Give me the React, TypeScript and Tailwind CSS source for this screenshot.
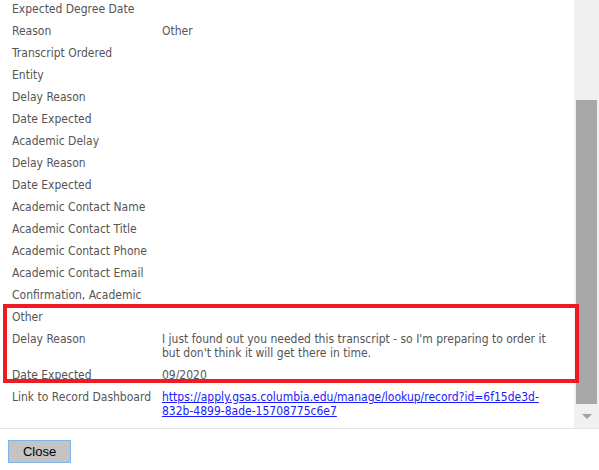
import React from "react";

type Row = { label: string; value?: React.ReactNode };

const rows: Row[] = [
  { label: "Expected Degree Date" },
  { label: "Reason", value: "Other" },
  { label: "Transcript Ordered" },
  { label: "Entity" },
  { label: "Delay Reason" },
  { label: "Date Expected" },
  { label: "Academic Delay" },
  { label: "Delay Reason" },
  { label: "Date Expected" },
  { label: "Academic Contact Name" },
  { label: "Academic Contact Title" },
  { label: "Academic Contact Phone" },
  { label: "Academic Contact Email" },
  { label: "Confirmation, Academic" },
  { label: "Other" },
  {
    label: "Delay Reason",
    value:
      "I just found out you needed this transcript - so I'm preparing to order it but don't think it will get there in time.",
  },
  { label: "Date Expected", value: "09/2020" },
  {
    label: "Link to Record Dashboard",
    value: (
      <a href="#" className="text-[#1a1aff] underline">
        https://apply.gsas.columbia.edu/manage/lookup/record?id=6f15de3d-832b-4899-8ade-15708775c6e7
      </a>
    ),
  },
];

export default function App() {
  return (
    <div
      className="w-[599px] h-[470px] bg-white flex flex-col overflow-hidden"
      style={{ fontFamily: '"DejaVu Sans Condensed", "DejaVu Sans", sans-serif' }}
    >
      <div className="relative h-[428px] flex overflow-hidden">
        <div className="flex-1 overflow-hidden">
          <div className="-mt-[2px]">
            {rows.map((r, i) => (
              <div key={i} className="flex py-[4px] text-[12px] leading-[14px] text-[#555]">
                <div className="w-[162px] shrink-0 pl-[12px] whitespace-nowrap">{r.label}</div>
                <div className="w-[390px] break-words">{r.value}</div>
              </div>
            ))}
          </div>
        </div>
        {/* scrollbar */}
        <div className="w-[25px] bg-[#f0f0f0] flex flex-col items-center">
          <div className="h-[100px]" />
          <div className="w-[21px] h-[304px] bg-[#a8a8a8]" />
          <div className="flex-1 flex items-center justify-center">
            <div className="w-0 h-0 border-l-[5px] border-r-[5px] border-t-[5px] border-l-transparent border-r-transparent border-t-[#a3a3a3]" />
          </div>
        </div>
        {/* highlight box */}
        <div className="absolute left-[3px] top-[304px] w-[576px] h-[79px] border-[4px] border-[#ed1c24] pointer-events-none" />
      </div>
      <div className="h-px bg-[#e5e5e5]" />
      <div className="pl-[8px] pt-[10px]">
        <button
          className="w-[63px] h-[23px] bg-[#c4c4c4] border border-[#7eb4ea] text-[13px] text-black"
          style={{ fontFamily: '"Liberation Sans", Arial, sans-serif' }}
        >
          Close
        </button>
      </div>
    </div>
  );
}
